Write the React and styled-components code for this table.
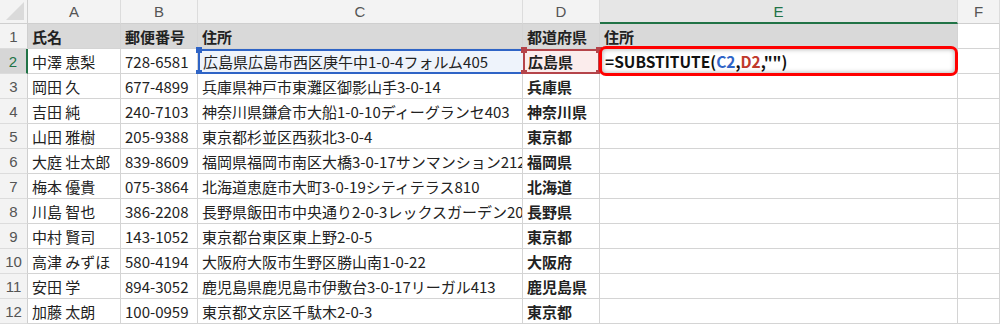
import React from 'react'
import styled, { createGlobalStyle, css } from 'styled-components'

const GlobalStyle = createGlobalStyle`
  html, body { margin: 0; padding: 0; background: #fff; }
  body { font-family: "Noto Sans CJK JP", "Noto Sans", sans-serif; }
`

const rows = [
  ['中澤 恵梨', '728-6581', '広島県広島市西区庚午中1-0-4フォルム405', '広島県'],
  ['岡田 久', '677-4899', '兵庫県神戸市東灘区御影山手3-0-14', '兵庫県'],
  ['吉田 純', '240-7103', '神奈川県鎌倉市大船1-0-10ディーグランセ403', '神奈川県'],
  ['山田 雅樹', '205-9388', '東京都杉並区西荻北3-0-4', '東京都'],
  ['大庭 壮太郎', '839-8609', '福岡県福岡市南区大橋3-0-17サンマンション212', '福岡県'],
  ['梅本 優貴', '075-3864', '北海道恵庭市大町3-0-19シティテラス810', '北海道'],
  ['川島 智也', '386-2208', '長野県飯田市中央通り2-0-3レックスガーデン205', '長野県'],
  ['中村 賢司', '143-1052', '東京都台東区東上野2-0-5', '東京都'],
  ['高津 みずほ', '580-4194', '大阪府大阪市生野区勝山南1-0-22', '大阪府'],
  ['安田 学', '894-3052', '鹿児島県鹿児島市伊敷台3-0-17リーガル413', '鹿児島県'],
  ['加藤 太朗', '100-0959', '東京都文京区千駄木2-0-3', '東京都'],
]

const Sheet = styled.div`
  display: grid;
  grid-template-columns: 28px 93px 77px 325px 77px 358px 1fr;
  grid-template-rows: 24px repeat(12, 25px);
  width: 1000px;
  overflow: hidden;
  font-size: 15px;
  color: #222;
`

const ColHead = styled.div`
  display: flex;
  align-items: center;
  justify-content: center;
  box-sizing: border-box;
  background: ${p => (p.active ? '#e6e6e6' : '#f3f3f3')};
  border-right: 1px solid #dcdcdc;
  border-bottom: ${p => (p.active ? '2px solid #217346' : '1px solid #cfcfcf')};
  color: ${p => (p.active ? '#217346' : '#555')};
  font-family: "Liberation Sans", "Noto Sans", sans-serif;
  font-size: 15px;
`

const Corner = styled.div`
  position: relative;
  box-sizing: border-box;
  background: #f3f3f3;
  border-right: 1px solid #cfcfcf;
  border-bottom: 1px solid #cfcfcf;
  &::after {
    content: '';
    position: absolute;
    right: 3px;
    bottom: 3px;
    border-left: 18px solid transparent;
    border-bottom: 18px solid #dadada;
  }
`

const RowHead = styled.div`
  display: flex;
  align-items: center;
  justify-content: center;
  box-sizing: border-box;
  background: ${p => (p.active ? '#d6d6d6' : '#f3f3f3')};
  border-right: ${p => (p.active ? '2px solid #217346' : '1px solid #cfcfcf')};
  border-bottom: 1px solid #dcdcdc;
  color: ${p => (p.active ? '#217346' : '#555')};
  font-family: "Liberation Sans", "Noto Sans", sans-serif;
  font-size: 15px;
`

const Cell = styled.div`
  position: relative;
  display: flex;
  align-items: center;
  box-sizing: border-box;
  padding: 0 4px;
  white-space: nowrap;
  overflow: ${p => (p.spill ? 'visible' : 'hidden')};
  border-right: 1px solid #d4d4d4;
  border-bottom: 1px solid #d4d4d4;
  background: ${p => (p.head ? '#d9d9d9' : '#fff')};
  font-weight: ${p => (p.bold ? 700 : 400)};
  ${p => p.sel === 'blue' && css`
    background: #eef3fb;
    border: 2px solid #2f64c6;
    border-right: none;
    padding-left: 3px;
  `}
  ${p => p.sel === 'red' && css`
    background: #fbecec;
    border: 2px solid #b5444a;
    padding-left: 3px;
  `}
`

const Handle = styled.span`
  position: absolute;
  width: 6px;
  height: 6px;
  background: ${p => p.color};
  ${p => (p.top ? 'top: -4px;' : 'bottom: -4px;')}
  ${p => (p.left ? 'left: -4px;' : 'right: -4px;')}
`

const Callout = styled.div`
  position: absolute;
  left: -1px;
  right: -1px;
  top: -3px;
  bottom: -3px;
  border: 3px solid #ff0000;
  border-radius: 7px;
  background: #fff;
  box-shadow: inset 0 0 5px rgba(0, 0, 0, 0.35);
  display: flex;
  align-items: center;
  padding-left: 3px;
  font-weight: 700;
  font-size: 15.5px;
  color: #111;
  z-index: 2;
`

const Ref = styled.span`
  color: ${p => p.color};
`

const Handles = ({ color }) => (
  <>
    <Handle color={color} top left />
    <Handle color={color} />
    <Handle color={color} top />
    <Handle color={color} left />
  </>
)

export default function App() {
  return (
    <>
      <GlobalStyle />
      <Sheet>
        <Corner />
        {['A', 'B', 'C', 'D', 'E', 'F'].map(l => (
          <ColHead key={l} active={l === 'E'}>{l}</ColHead>
        ))}

        <RowHead>1</RowHead>
        <Cell head bold>氏名</Cell>
        <Cell head bold>郵便番号</Cell>
        <Cell head bold>住所</Cell>
        <Cell head bold>都道府県</Cell>
        <Cell head bold>住所</Cell>
        <Cell />

        {rows.map((r, i) => {
          const first = i === 0
          return (
            <React.Fragment key={i}>
              <RowHead active={first}>{i + 2}</RowHead>
              <Cell>{r[0]}</Cell>
              <Cell>{r[1]}</Cell>
              <Cell sel={first ? 'blue' : undefined} spill={first}>
                {r[2]}
                {first && <Handles color="#2f64c6" />}
              </Cell>
              <Cell bold sel={first ? 'red' : undefined} spill={first}>
                {r[3]}
                {first && <Handles color="#b5444a" />}
              </Cell>
              <Cell spill={first}>
                {first && (
                  <Callout>
                    =SUBSTITUTE(<Ref color="#2f64c6">C2</Ref>,<Ref color="#c0392b">D2</Ref>,"")
                  </Callout>
                )}
              </Cell>
              <Cell />
            </React.Fragment>
          )
        })}
      </Sheet>
    </>
  )
}
